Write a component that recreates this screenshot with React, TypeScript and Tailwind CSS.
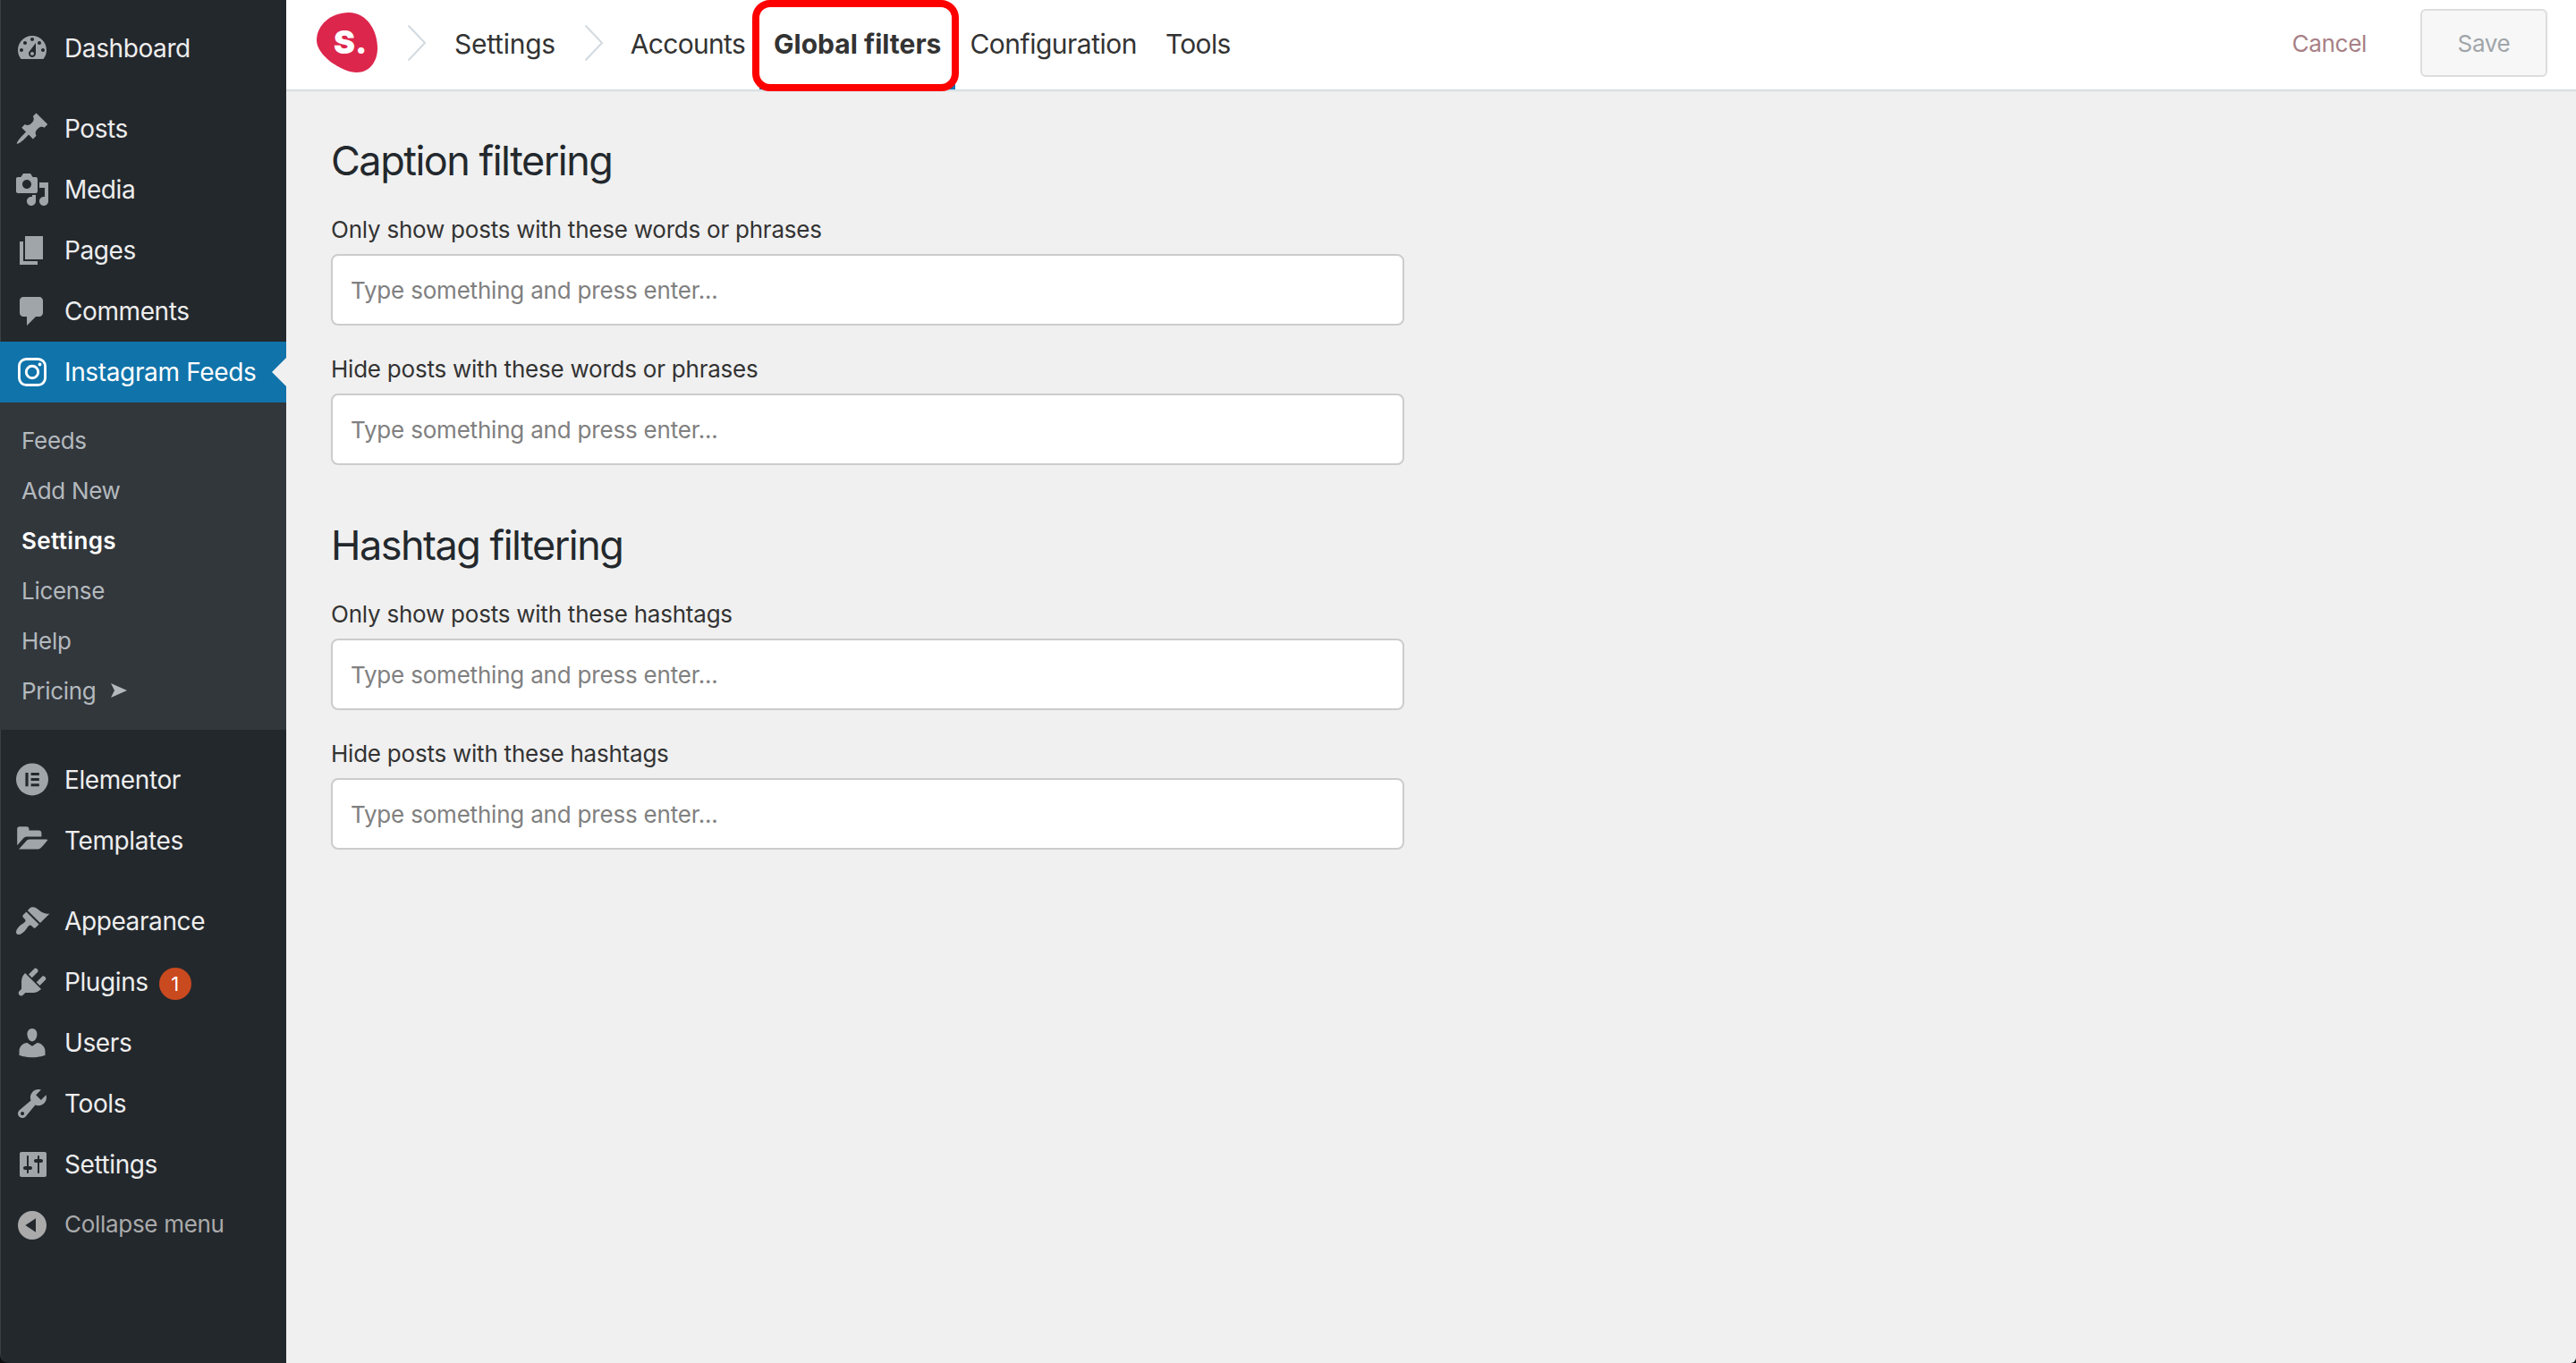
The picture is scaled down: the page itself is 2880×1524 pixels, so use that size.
import React from 'react';

interface MenuItem {
    label: string;
    icon: React.ReactNode;
    badge?: number;
}

const Icon: React.FC<{ d: string }> = ({ d }) => (
    <svg viewBox="0 0 20 20" className="w-10 h-10" fill="currentColor" fillRule="evenodd">
        <path d={d} />
    </svg>
);

const icons = {
    dashboard: 'M3.76 16h12.48c1.1-1.37 1.76-3.11 1.76-5 0-4.42-3.58-8-8-8s-8 3.58-8 8c0 1.89.66 3.63 1.76 5zM10 4c.55 0 1 .45 1 1s-.45 1-1 1-1-.45-1-1 .45-1 1-1zM6 6c.55 0 1 .45 1 1s-.45 1-1 1-1-.45-1-1 .45-1 1-1zm8 0c.55 0 1 .45 1 1s-.45 1-1 1-1-.45-1-1 .45-1 1-1zm-5.37 5.55L12 7v6c0 1.1-.9 2-2 2s-2-.9-2-2c0-.57.24-1.08.63-1.45zM4 10c.55 0 1 .45 1 1s-.45 1-1 1-1-.45-1-1 .45-1 1-1zm12 0c.55 0 1 .45 1 1s-.45 1-1 1-1-.45-1-1 .45-1 1-1zm-5 3c0-.55-.45-1-1-1s-1 .45-1 1 .45 1 1 1 1-.45 1-1z',
    posts: 'M10.44 3.02l1.82-1.82 6.36 6.35-1.83 1.82c-1.05-.68-2.48-.57-3.41.36l-.75.75c-.92.93-1.04 2.35-.35 3.41l-1.83 1.82-2.41-2.41-2.8 2.79c-.42.42-3.38 2.71-3.8 2.29s1.86-3.39 2.28-3.81l2.79-2.79L4.1 9.36l1.83-1.82c1.05.69 2.48.57 3.4-.36l.75-.75c.93-.92 1.05-2.35.36-3.41z',
    media: 'M13 11V4c0-.55-.45-1-1-1h-1.67L9 1H5L3.67 3H2c-.55 0-1 .45-1 1v7c0 .55.45 1 1 1h10c.55 0 1-.45 1-1zM7 4.5c1.38 0 2.5 1.12 2.5 2.5S8.38 9.5 7 9.5 4.5 8.38 4.5 7 5.62 4.5 7 4.5zM14 6h5v10.5c0 1.38-1.12 2.5-2.5 2.5S14 17.88 14 16.5s1.12-2.5 2.5-2.5c.17 0 .34.02.5.05V9h-3V6zm-4 8.05V13h2v3.5c0 1.38-1.12 2.5-2.5 2.5S7 17.88 7 16.5 8.12 14 9.5 14c.17 0 .34.02.5.05z',
    pages: 'M6 15V2h10v13H6zm-1 1h8v2H3V5h2v11z',
    comments: 'M5 2h9c1.1 0 2 .9 2 2v7c0 1.1-.9 2-2 2h-2l-5 5v-5H5c-1.1 0-2-.9-2-2V4c0-1.1.9-2 2-2z',
    appearance: 'M14.48 11.06L7.41 3.99l1.5-1.5c.5-.56 2.3-.47 3.51.32 1.21.8 1.43 1.28 2.91 2.1 1.18.64 2.45 1.26 4.45.85zm-.71.71L6.7 4.7 4.93 6.47c-.39.39-.39 1.02 0 1.41l1.06 1.06c.39.39.39 1.03 0 1.42-.6.6-1.43 1.11-2.21 1.69-.35.26-.7.53-1.01.84C1.43 14.23.4 16.08 1.4 17.07c.99 1 2.84-.03 4.18-1.36.31-.31.58-.66.85-1.02.57-.78 1.08-1.61 1.69-2.21.39-.39 1.02-.39 1.41 0l1.06 1.06c.39.39 1.02.39 1.41 0z',
    plugins: 'M13.11 4.36L9.87 7.6 8 5.73l3.24-3.24c.35-.34 1.05-.2 1.56.32.52.51.66 1.21.31 1.55zm-8 1.77l.91-1.12 9.01 9.01-1.19.84c-.71.71-2.63 1.16-3.82 1.16H6.14L4.9 17.26c-.59.59-1.54.59-2.12 0-.59-.58-.59-1.53 0-2.12l1.24-1.24v-3.88c0-1.13.4-3.19 1.09-3.89zm7.26 3.97l3.24-3.24c.34-.35 1.04-.21 1.55.31.52.51.66 1.21.31 1.55l-3.24 3.25z',
    users: 'M10 9.25c-2.27 0-2.73-3.44-2.73-3.44C7 4.02 7.82 2 9.97 2c2.16 0 2.98 2.02 2.71 3.81 0 0-.41 3.44-2.68 3.44zm0 2.57L12.72 10c2.39 0 4.52 2.33 4.52 4.53v2.49s-3.65 1.13-7.24 1.13c-3.65 0-7.24-1.13-7.24-1.13v-2.49c0-2.25 1.94-4.48 4.47-4.48z',
    tools: 'M16.68 9.77c-1.34 1.34-3.3 1.67-4.95.99l-5.41 6.52c-.99.99-2.59.99-3.58 0s-.99-2.59 0-3.57l6.52-5.42c-.68-1.65-.35-3.61.99-4.95 1.28-1.28 3.12-1.62 4.72-1.06l-2.89 2.89 2.82 2.82 2.86-2.87c.53 1.58.18 3.39-1.08 4.65zM3.81 16.21c.4.39 1.04.39 1.43 0 .4-.4.4-1.04 0-1.43-.39-.4-1.03-.4-1.43 0-.39.39-.39 1.03 0 1.43z',
    settings: 'M18 16V4c0-.55-.45-1-1-1H4c-.55 0-1 .45-1 1v12c0 .55.45 1 1 1h13c.55 0 1-.45 1-1zM8 11h1c.55 0 1 .45 1 1s-.45 1-1 1H8v1.5c0 .28-.22.5-.5.5s-.5-.22-.5-.5V13H6c-.55 0-1-.45-1-1s.45-1 1-1h1V5.5c0-.28.22-.5.5-.5s.5.22.5.5V11zm5-2h-1c-.55 0-1-.45-1-1s.45-1 1-1h1V5.5c0-.28.22-.5.5-.5s.5.22.5.5V7h1c.55 0 1 .45 1 1s-.45 1-1 1h-1v5.5c0 .28-.22.5-.5.5s-.5-.22-.5-.5V9z',
    collapse: 'M10 2c4.42 0 8 3.58 8 8s-3.58 8-8 8-8-3.58-8-8 3.58-8 8-8zm2 11.88V6.12L6.18 9.97z',
    // four bars cut out of a disc
    elementor: 'M10 .7a9 9 0 1 1 0 18a9 9 0 1 1 0-18zM6.2 6v7.6h1.6V6zM9.3 6v1.5h4.6V6zM9.3 9.05v1.5h4.6v-1.5zM9.3 12.1v1.5h4.6v-1.5z',
    templates: 'M1.6 12.6V3.4c0-.7.5-1.3 1.3-1.3h4c.8 0 1.3.5 1.3 1.3v.9h5.5c.9 0 1.5.6 1.5 1.4v2H7.3c-.9 0-1.7.3-2.3 1zM2.5 14.7l4-4.3c.5-.8 1.2-1.2 2-1.2h9.6c.4 0 .6.4.3.8l-2.9 3.4c-.7.8-1.5 1.3-2.4 1.3z',
};

const InstagramIcon: React.FC = () => (
    <svg viewBox="0 0 40 40" className="w-10 h-10" fill="none" stroke="currentColor" strokeWidth="2.9">
        <rect x="5.45" y="5.45" width="29.1" height="29.1" rx="8" />
        <circle cx="20" cy="20" r="6.7" />
        <circle cx="28.5" cy="11.5" r="1.9" fill="currentColor" stroke="none" />
    </svg>
);

const contentItems: MenuItem[] = [
    { label: 'Posts', icon: <Icon d={icons.posts} /> },
    { label: 'Media', icon: <Icon d={icons.media} /> },
    { label: 'Pages', icon: <Icon d={icons.pages} /> },
    { label: 'Comments', icon: <Icon d={icons.comments} /> },
];

const builderItems: MenuItem[] = [
    { label: 'Elementor', icon: <Icon d={icons.elementor} /> },
    { label: 'Templates', icon: <Icon d={icons.templates} /> },
];

const adminItems: MenuItem[] = [
    { label: 'Appearance', icon: <Icon d={icons.appearance} /> },
    { label: 'Plugins', icon: <Icon d={icons.plugins} />, badge: 1 },
    { label: 'Users', icon: <Icon d={icons.users} /> },
    { label: 'Tools', icon: <Icon d={icons.tools} /> },
    { label: 'Settings', icon: <Icon d={icons.settings} /> },
];

const submenu = ['Feeds', 'Add New', 'Settings', 'License', 'Help', 'Pricing'];

const SidebarItem: React.FC<MenuItem> = ({ label, icon, badge }) => (
    <li className="flex items-center h-[68px] pl-4 text-[#eee]">
        <span className="text-[#a0a5aa]">{icon}</span>
        <a href="#" className="ml-4 text-[28px] tracking-[-0.4px]">{label}</a>
        {badge && (
            <span className="flex items-center justify-center w-9 h-9 ml-3 mt-1 rounded-full bg-[#ca4a1f] text-white text-[22px]">{badge}</span>
        )}
    </li>
);

const Sidebar: React.FC = () => (
    <nav className="w-80 shrink-0 pt-5 bg-[#23282d] border-l border-[#3a3f44] rounded-bl-[10px]">
        <div className="-ml-px">
            <ul>
                <SidebarItem label="Dashboard" icon={<Icon d={icons.dashboard} />} />
            </ul>
            <ul className="mt-[22px]">
                {contentItems.map((item) => <SidebarItem key={item.label} {...item} />)}
                <li>
                    <div className="relative flex items-center h-[68px] pl-4 bg-[#1073aa] text-white">
                        <InstagramIcon />
                        <a href="#" className="ml-4 text-[28px] tracking-[-0.35px]">Instagram Feeds</a>
                        <span className="absolute right-0 top-[18px] border-y-16 border-y-transparent border-r-16 border-r-[#f0f0f0]"></span>
                    </div>
                    <ul className="pt-3.5 pb-4 bg-[#32373c]">
                        {submenu.map((label) => (
                            <li key={label} className="flex items-center h-14 pl-6 text-[26px]">
                                <a href="#" className={label === 'Settings' ? 'font-semibold text-white tracking-[0.35px]' : 'text-[#b4b9be] tracking-[-0.3px]'}>{label}</a>
                                {label === 'Pricing' && (
                                    <svg viewBox="0 0 18 16" className="w-[18px] h-4 ml-[17px] text-[#b4b9be]" fill="currentColor">
                                        <path d="M0 0L18 8L0 16L4 8z" />
                                    </svg>
                                )}
                            </li>
                        ))}
                    </ul>
                </li>
            </ul>
            <ul className="mt-[22px]">
                {builderItems.map((item) => <SidebarItem key={item.label} {...item} />)}
            </ul>
            <ul className="mt-[22px]">
                {adminItems.map((item) => <SidebarItem key={item.label} {...item} />)}
            </ul>
            <button className="flex items-center h-[68px] pl-4 text-[#aaa]">
                <Icon d={icons.collapse} />
                <span className="ml-4 mb-[3px] text-[26px] tracking-[-0.3px]">Collapse menu</span>
            </button>
        </div>
    </nav>
);

const Chevron: React.FC = () => (
    <svg viewBox="0 0 20 40" className="w-5 h-10" fill="none" stroke="#d3dae0" strokeWidth="2">
        <path d="M.5 .5L19 20L.5 39.5" />
    </svg>
);

const Logo: React.FC = () => (
    <svg viewBox="0 0 68 68" className="w-[68px] h-[68px]">
        <path d="M36 0C56 0 68 20 68 40C68 56 58 67 45 67C28 67 0 48 0 31C0 14 16 0 36 0z" fill="#dc264c" />
        <text x="19" y="45.5" fill="#fff" fontFamily="Inter, sans-serif" fontWeight="900" fontSize="36">S.</text>
    </svg>
);

const Header: React.FC = () => (
    <header className="relative flex items-center justify-between h-[100px] bg-white shadow-[0_1px_0_#d3dbe1,0_2px_0_#dde2e6,0_3px_0_#e8eaeb] text-[30px] text-[#333]">
        <div className="flex items-center h-full">
            <div className="ml-[34px] mb-1"><Logo /></div>
            <div className="ml-[34px] mb-1"><Chevron /></div>
            <span className="ml-8 mb-px tracking-[-0.25px]">Settings</span>
            <div className="ml-[33px] mb-1"><Chevron /></div>
            <nav className="flex items-center h-full ml-[31px] tracking-[-0.5px]">
                <a href="#" className="mb-px tracking-[-0.7px]">Accounts</a>
                <a href="#" className="relative flex items-center h-full px-4 pt-[5px] ml-4 font-bold tracking-normal border-b-6 border-[#1079b3]">
                    Global filters
                    <span className="absolute -left-2 -right-1 top-0 h-[102px] border-8 border-[#f00] rounded-[20px]"></span>
                </a>
                <a href="#" className="ml-4 mb-px">Configuration</a>
                <a href="#" className="ml-8 mb-px tracking-[-0.7px]">Tools</a>
            </nav>
        </div>
        <div className="flex items-center pr-8 mb-1 text-[26px] tracking-[-0.3px]">
            <button className="text-[#a77f86]">Cancel</button>
            <button className="w-[142px] h-[76px] ml-[60px] bg-[#f7f7f7] border-2 border-[#ddd] rounded-md text-[#a0a5aa]">Save</button>
        </div>
    </header>
);

const FilterField: React.FC<{ label: string }> = ({ label }) => (
    <div>
        <label className="block pt-px mb-[9px] text-[26px] leading-9 tracking-[-0.23px] text-[#333]">{label}</label>
        <input
            type="text"
            placeholder="Type something and press enter..."
            className="block w-full h-20 px-5 bg-white border-2 border-[#ccc] rounded-lg text-[26px] tracking-[-0.2px] placeholder:text-[#808080]"
        />
    </div>
);

const FilterGroup: React.FC<{ title: string; fields: string[] }> = ({ title, fields }) => (
    <section className="flex flex-col gap-[30px]">
        <h2 className="text-[45px] leading-14 tracking-[-1.5px] text-[#23282d]">{title}</h2>
        {fields.map((field) => <FilterField key={field} label={field} />)}
    </section>
);

const App: React.FC = () => {
    return (
        <div className="flex w-[2880px] h-[1524px] overflow-hidden bg-[#0d0f10] font-['Inter',sans-serif]">
            <Sidebar />
            <div className="flex-1 bg-[#f0f0f0] rounded-br-md">
                <Header />
                <main className="flex flex-col gap-[62px] w-[1200px] ml-[50px] pt-[52px]">
                    <FilterGroup
                        title="Caption filtering"
                        fields={['Only show posts with these words or phrases', 'Hide posts with these words or phrases']}
                    />
                    <FilterGroup
                        title="Hashtag filtering"
                        fields={['Only show posts with these hashtags', 'Hide posts with these hashtags']}
                    />
                </main>
            </div>
        </div>
    );
};

export default App;
